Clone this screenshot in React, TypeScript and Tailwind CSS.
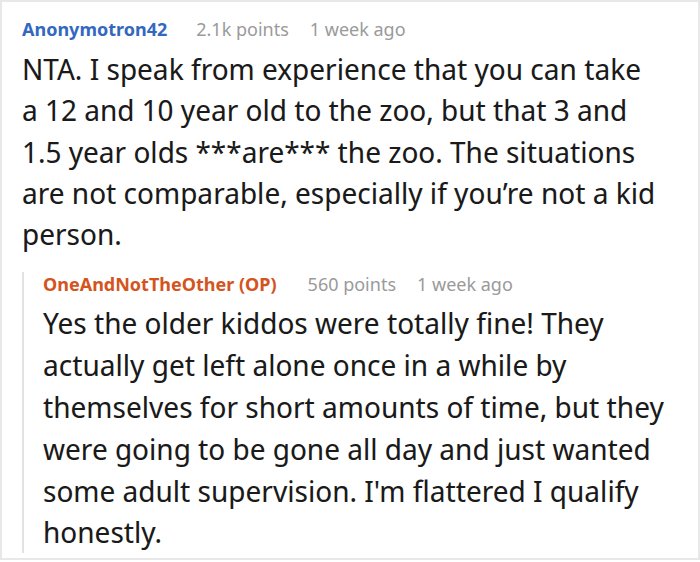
import React from "react";

const p1 = [
  "NTA. I speak from experience that you can take",
  "a 12 and 10 year old to the zoo, but that 3 and",
  "1.5 year olds ***are*** the zoo. The situations",
  "are not comparable, especially if you’re not a kid",
  "person.",
];
const p2 = [
  "Yes the older kiddos were totally fine! They",
  "actually get left alone once in a while by",
  "themselves for short amounts of time, but they",
  "were going to be gone all day and just wanted",
  "some adult supervision. I'm flattered I qualify",
  "honestly.",
];

function Lines({ lines }: { lines: string[] }) {
  return (
    <>
      {lines.map((l, i) => (
        <React.Fragment key={i}>
          {l}
          {i < lines.length - 1 && <br />}
        </React.Fragment>
      ))}
    </>
  );
}

export default function App() {
  return (
    <div className="w-[700px] h-[562px] bg-white font-['Noto_Sans',sans-serif]">
      <div className="w-[700px] h-[560px] border-2 border-[#e8e8e8] pl-[20px] pt-[15px] pr-4">
        <div className="flex items-baseline text-[18px] leading-[24px]">
          <span className="font-bold text-[#3468c0]">Anonymotron42</span>
          <span className="ml-[29px] text-[#9a9a9a]">2.1k points</span>
          <span className="ml-[21px] text-[#9a9a9a]">1 week ago</span>
        </div>
        <p className="mt-[7px] text-[29.7px] leading-[41.3px] text-[#1a1a1a] whitespace-nowrap font-['Noto_Sans_Display','Noto_Sans',sans-serif]">
          <Lines lines={p1} />
        </p>
        <div className="mt-[28px] border-l-2 border-[#e2e2e2] pl-[19px]">
          <div className="-mt-[10px] flex items-baseline text-[18px] leading-[24px]">
            <span className="font-bold text-[#d4541e]">OneAndNotTheOther (OP)</span>
            <span className="ml-[31px] text-[#9a9a9a]">560 points</span>
            <span className="ml-[21px] text-[#9a9a9a]">1 week ago</span>
          </div>
          <p className="mt-[6px] text-[29.7px] leading-[41.8px] text-[#1a1a1a] whitespace-nowrap font-['Noto_Sans_Display','Noto_Sans',sans-serif]">
            <Lines lines={p2} />
          </p>
        </div>
      </div>
    </div>
  );
}
